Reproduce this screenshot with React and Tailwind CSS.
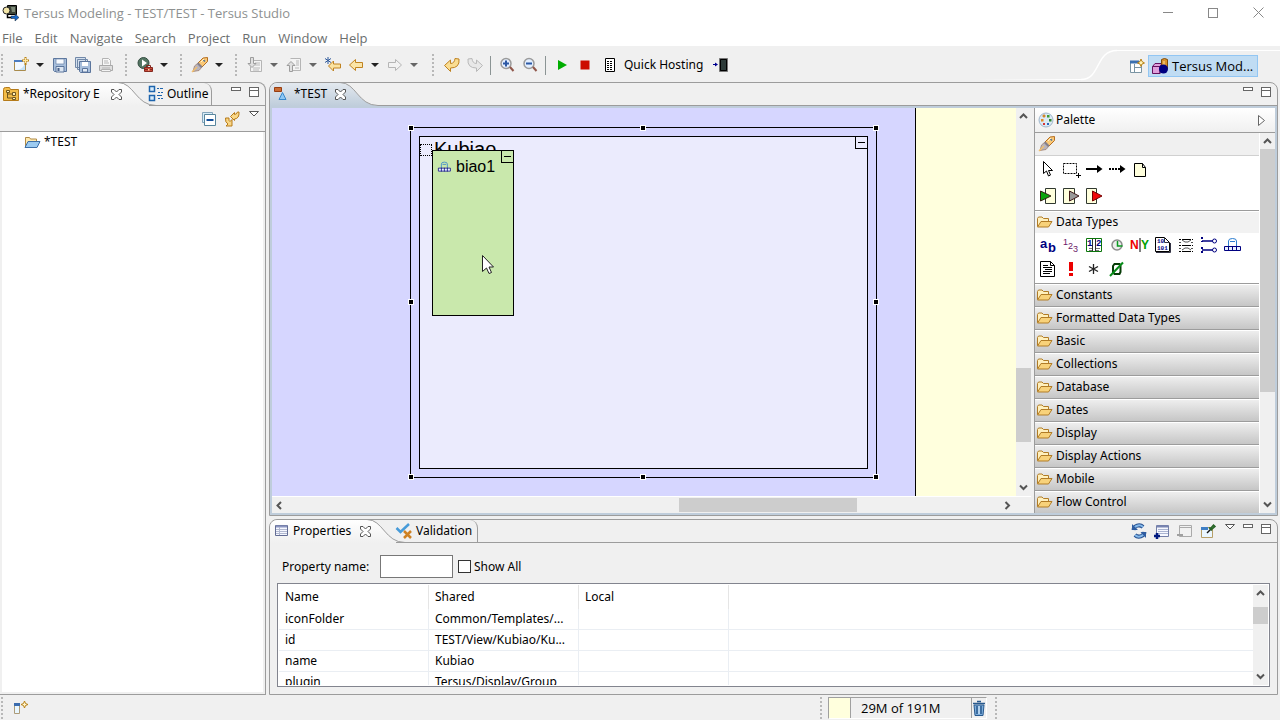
import { useState } from 'react'

const menus = ['File', 'Edit', 'Navigate', 'Search', 'Project', 'Run', 'Window', 'Help']

const drawers = [
  'Constants', 'Formatted Data Types', 'Basic', 'Collections', 'Database',
  'Dates', 'Display', 'Display Actions', 'Mobile', 'Flow Control',
]

const properties = [
  { name: 'iconFolder', shared: 'Common/Templates/...' },
  { name: 'id', shared: 'TEST/View/Kubiao/Ku...' },
  { name: 'name', shared: 'Kubiao' },
  { name: 'plugin', shared: 'Tersus/Display/Group' },
]

/* 16x16 icon drawings, keyed by command */
const art = {
  app: <>
    <path d="M4.500.500h9v9h-9z" fill="#3c4438" stroke="#000" />
    <path d="M8 2h4v5H9z" fill="#7d8a78" />
    <circle cx="3.500" cy="5.500" r="3.500" fill="#f3e6a8" stroke="#222" />
    <path d="M4.500 9.500v3h5" fill="none" stroke="#000" strokeWidth="1.500" />
    <path d="M8 11h4V9l4 3.500-4 3.500v-2.500H8z" fill="#1466c8" stroke="#123" strokeWidth=".5" />
  </>,
  newFile: <>
    <path d="M1.500 3.500h11v10h-11z" fill="#f2f8ff" stroke="#a98b4c" />
    <path d="M1 3h9v2H1z" fill="#4c7cc0" />
    <path d="M3 13q7 0 9-7v7z" fill="#c4e2f7" />
    <path d="M12.500 0v8M9 3.500h7" stroke="#b98216" strokeWidth="2" />
    <path d="M12.500 1v5M10 3.500h5" stroke="#ffe9a0" />
  </>,
  save: <>
    <path d="M1.500 1.500h13v13h-12l-1-1z" fill="#a8bfdc" stroke="#5b759c" />
    <path d="M4 2h8v5H4z" fill="#f8fbff" stroke="#6b84aa" strokeWidth=".7" />
    <path d="M4 9.500h8V15H4z" fill="#dce6f2" stroke="#5b759c" />
    <path d="M5.500 11h2v3h-2z" fill="#48618a" />
  </>,
  saveAll: <>
    <path d="M.5.500h10v10H.500zM2.500 2.500h10v10h-10z" fill="#d3dfed" stroke="#7188a8" />
    <path d="M4.500 4.500h11v11h-10l-1-1z" fill="#a8bfdc" stroke="#5b759c" />
    <path d="M7 5h6v4H7z" fill="#fff" />
    <path d="M7.500 11.500h5V15h-5z" fill="#e4ecf5" stroke="#5b759c" />
  </>,
  print: <>
    <path d="M4.500 1.500h6l2 2v5h-8z" fill="#f8f8f8" stroke="#b3b3b3" />
    <path d="M1.500 8.500h13v5h-13z" fill="#dedede" stroke="#a9a9a9" />
    <path d="M6 4h4M6 6h5M4 11h8" stroke="#b5b5b5" />
    <path d="M3.500 12.500h9v2h-9z" fill="#f4f4f4" stroke="#b3b3b3" />
  </>,
  run: <>
    <circle cx="6.500" cy="6" r="5.500" fill="#537562" stroke="#354e42" />
    <path d="M5 2.500 10 6l-5 3.500z" fill="#fff" />
    <path d="M7.500 10.500h8v4h-8z" fill="#c94a3b" stroke="#84281e" />
    <path d="M9.500 10V8.500h4V10M8 12.500h7" fill="none" stroke="#84281e" />
    <path d="M11 12h1.500v1.500H11z" fill="#ffd1a8" />
  </>,
  rocket: <>
    <path d="M1 14.500 2.500 9 6 6l4 4-3 3.500z" fill="#b9b4bc" stroke="#a08070" strokeWidth=".8" />
    <path d="M6 6 11 1l4.500-.5V4.500L10 10z" fill="#fbc977" stroke="#b56f22" />
    <path d="m5 7 4 4 1.500-1.500-4-4z" fill="#85808c" />
    <path d="m0 15 5-5" stroke="#f3bf6d" strokeWidth="1.500" />
    <path d="m11.500 3 1.500 1.500" stroke="#4b7299" strokeWidth="1.500" />
    <path d="m9 5 3-3" stroke="#fff3cf" />
  </>,
  nextNote: <>
    <path d="M6.500 3.500h8v11h-11v-5" fill="#f4f4f4" stroke="#b5b5b5" />
    <path d="M8 6h5M8 8h5M6 11h7M6 13h6" stroke="#b8b8b8" />
    <path d="M3.500.500h3v6H9L5 10.500 1 6.500h2.500z" fill="#e0e0e0" stroke="#9d9d9d" />
  </>,
  prevNote: <>
    <path d="M4.500 1.500h10v12h-8" fill="#f4f4f4" stroke="#b5b5b5" />
    <path d="M10 4h3M10 6h3M10 8h3M9 11h4" stroke="#b8b8b8" />
    <path d="M3.500 14.500v-6H1L5 4.500l4 4H6.500v6z" fill="#e0e0e0" stroke="#9d9d9d" />
  </>,
  lastEdit: <>
    <path d="M3.500 9 8.500 4v3h7v4h-7v3z" fill="#fbe3a1" stroke="#c08321" />
    <path d="M3 0v7M0 1.500l6 4M6 1.500l-6 4" stroke="#2f5a9c" />
  </>,
  back: <path d="M1.500 8 7.500 2.500v3h7v5h-7v3z" fill="#fbe5a8" stroke="#c08321" />,
  forward: <path d="M14.500 8 8.500 2.500v3h-7v5h7v3z" fill="#f2f2f2" stroke="#b5b5b5" />,
  undo: <path d="M.5 8.500 6.500 3V6.500q4 0 4.500-5l4 .5q1 9-8.500 9v3.500z" fill="#fadd92" stroke="#bf8220" />,
  redo: <path d="M15.500 8.500 9.500 3V6.500q-4 0-4.500-5L1 2q-1 9 8.500 9v3.500z" fill="#e8e8e8" stroke="#b9b9b9" />,
  zoomIn: <>
    <circle cx="7" cy="6.500" r="5" fill="#e4efff" stroke="#9b9b9b" strokeWidth="1.500" />
    <path d="M4 6.500h6M7 3.500v6" stroke="#2b58a5" strokeWidth="2" />
    <path d="m11 10 3.500 4" stroke="#90574b" strokeWidth="2" />
  </>,
  zoomOut: <>
    <circle cx="7" cy="6.500" r="5" fill="#e4efff" stroke="#9b9b9b" strokeWidth="1.500" />
    <path d="M4 6.500h6" stroke="#2b58a5" strokeWidth="2" />
    <path d="m11 10 3.500 4" stroke="#90574b" strokeWidth="2" />
  </>,
  play: <path d="M4 3 13 8 4 13z" fill="#00ad00" />,
  stop: <path d="M3.500 3.500h9v9h-9z" fill="#cc0c00" />,
  log: <>
    <path d="M3.500 1.500h9v13h-9z" fill="#fff" stroke="#000" />
    <path d="M5 4.500h6M5 6.500h6M5 8.500h6M5 10.500h6M5 12.500h5" stroke="#000" strokeDasharray="2 1" />
  </>,
  phone: <>
    <path d="M6.500 1.500h8v13h-8z" fill="#2d3b39" stroke="#777" />
    <path d="M7.500 2.500h6v11h-6z" fill="none" stroke="#000" />
    <path d="M0 7.500h4" stroke="#000090" />
    <path d="M2 5.500 5 7.500 2 9.500z" fill="#000090" />
  </>,
  openView: <>
    <path d="M1.500 3.500h11v11h-11z" fill="#fff" stroke="#7a94a3" />
    <path d="M1 2.500h9v3H1z" fill="#3c70b0" />
    <path d="M5.500 6v8M6 9.500h6.500" stroke="#7a94a3" />
    <path d="m12 1 1 2.500L15.500 5 13 6l-1 2.500L11 6 8.500 5l2.500-1.500z" fill="#fff3b5" stroke="#b98216" />
  </>,
  shapes: <>
    <path d="M.5 8.500 3 5.500h7l-2 3v7H.500z" fill="#df9fdb" stroke="#65105d" />
    <path d="M.5 8.500h7.500v7" fill="none" stroke="#65105d" />
    <path d="M9.500 1.500q3-2 6 0V11h-6z" fill="#d9932c" stroke="#804c0c" />
    <path d="M12 3v6" stroke="#ffe0a0" />
    <circle cx="11.500" cy="11" r="4.500" fill="#000080" />
  </>,
  repo: <>
    <path d="M.5 3.500q0-2 2-2h4l1 2h8v11H.500z" fill="#f2bc49" stroke="#b57b1a" />
    <path d="M4.500 5v7h5M4.500 8h5" fill="none" stroke="#6f551f" />
    <path d="M3.500 4.500h3v2h-3zM9.500 6.500h3v3h-3zM9.500 11.500h3v2h-3z" fill="#fff0b8" stroke="#6f551f" />
  </>,
  outline: <>
    <path d="M.5.500h5v5h-5zM.5 9.500h5v5h-5z" fill="#d8ecfb" stroke="#1d64ad" strokeWidth="1.500" />
    <path d="M8 2.500h2M11 2.500h3M9 6.500h2M12 6.500h2M8 9.500h5M9 12.500h2M12 12.500h2" stroke="#1d64ad" />
  </>,
  diagram: <>
    <path d="M.5 1.500h7v4h-7z" fill="#c96b32" stroke="#973d10" />
    <path d="M8.500 6.500 12 13.500H5z" fill="#8dc8f5" stroke="#3888cc" />
  </>,
  collapse: <>
    <path d="M1.500 1.500h10v10h-10z" fill="#d8ecf8" stroke="#84a5bb" />
    <path d="M3.500 3.500h11v11h-11z" fill="#fff" stroke="#58869d" />
    <path d="M5.500 9h7" stroke="#124f9a" strokeWidth="2" />
  </>,
  sync: <>
    <path d="M6.500 5.500 10.500 1.500v2q2 0 3-2.500h1.500q.5 6.500-4.500 7v1.500z" fill="#f9d787" stroke="#b77a18" />
    <path d="M1.500 7h3.500q-.5 3 1 3.500l2-2V15H2l2-2q-3-1.500-2.500-6z" fill="#f9d787" stroke="#b77a18" />
  </>,
  project: <>
    <path d="M1.500 12V3.500h4l1 1.500h6v3" fill="#ffeab0" stroke="#b08a46" />
    <path d="M4 7.500h12l-3 6H1z" fill="#9ccbf1" stroke="#3d6fa7" />
  </>,
  folder: <>
    <path d="M.5 12.500V4.500l1-1.500h3.500l1.500 1.500h5v3" fill="#fff0bd" stroke="#b17c26" />
    <path d="M4 7.500H15l-3.500 5.500H.500z" fill="#f8d27a" stroke="#b17c26" />
  </>,
  table: <>
    <path d="M.5 2.500h12v10H.500z" fill="#f5f7ff" stroke="#626c94" />
    <path d="M1 3.500h11" stroke="#8a94c0" strokeWidth="2" />
    <path d="M1 6.500h11M1 8.500h11M1 10.500h11M4.500 4v8" stroke="#b1b8d0" />
  </>,
  validation: <>
    <path d="m.500 5 4 4L13 1" fill="none" stroke="#479bd9" strokeWidth="2.500" />
    <path d="m8 8 7 7M15 8l-7 7" stroke="#ce8123" strokeWidth="2.500" />
  </>,
  palette: <>
    <circle cx="7" cy="8" r="7" fill="#dce9f5" stroke="#a0b6cb" />
    <path d="M4 3h2v2H4z" fill="#f3a742" stroke="#bf7418" strokeWidth=".7" />
    <path d="M8 3h2.500v2.500H8z" fill="#3e9b33" /><path d="M10 7h2.500v2.500H10z" fill="#2c862a" />
    <path d="M2 7h2.500v2.500H2z" fill="#e18b24" /><path d="M4 11h2v2H4z" fill="#d83434" />
    <path d="M8 11h2v2H8z" fill="#2868bb" />
  </>,
  pointer: <path d="M3.500.500v12l3-2.500 2 5 2-1-2-4.500h4z" fill="#fff" stroke="#000" />,
  marquee: <>
    <path d="M.5 2.500h13v10H.500z" fill="none" stroke="#000" strokeDasharray="2 1" />
    <path d="M15.500 12v5M13 14.500h5" stroke="#000" />
  </>,
  flow: <><path d="M0 8h12" stroke="#000" strokeWidth="2" /><path d="M11 4 16.500 8 11 12z" /></>,
  dashFlow: <><path d="M0 8h12" stroke="#000" strokeWidth="2" strokeDasharray="2 1" /><path d="M11 4 16.500 8 11 12z" /></>,
  note: <path d="M2.500 2.500h8l3 4v9h-11zM10.500 2.500v4h3" fill="#ffffdd" stroke="#000" />,
  entry: <><path d="M5.500.500h10v15h-10z" fill="#ffffdd" stroke="#303830" /><path d="M.5 3 11 8 .500 13z" fill="#0aa40a" stroke="#321" /></>,
  slot: <><path d="M.5.500h11v15H.500z" fill="#ffffdd" stroke="#303830" /><path d="M6.500 3 16 8l-9.500 5z" fill="#999" stroke="#411a1a" /></>,
  exit: <><path d="M.5.500h10v15H.500z" fill="#ffffdd" stroke="#303830" /><path d="M6.500 3 16 8l-9.500 5z" fill="#f00808" stroke="#700" /></>,
  text: <g fill="#000080" fontFamily="Liberation Sans" fontWeight="700">
    <text x="0" y="11" fontSize="13">a</text><text x="8" y="15" fontSize="13">b</text>
  </g>,
  number: <g fill="#6b1768" fontFamily="Liberation Sans" fontSize="9">
    <text x="0" y="8">1</text><text x="5" y="12">2</text><text x="10" y="15">3</text>
  </g>,
  book: <>
    <path d="M.5 1.500h15v13H.500z" fill="#fff" stroke="#0b760b" />
    <path d="M6.500 2v12M9.500 2v12" stroke="#303030" />
    <g fill="#000080" fontFamily="Liberation Mono" fontSize="9" fontWeight="700"><text x="1" y="9">1</text><text x="10" y="9">2</text></g>
    <path d="M3 11.500h3M10 11.500h4M3 13.500h3M10 13.500h3" stroke="#777" />
  </>,
  clock: <>
    <circle cx="8" cy="8" r="5" fill="#eee" stroke="#8c8c8c" strokeWidth="1.500" />
    <path d="M8.500 4v5h5" fill="none" stroke="#0a9a20" strokeWidth="1.500" />
  </>,
  yesNo: <g fontFamily="Liberation Sans" fontSize="12" fontWeight="700">
    <text x="-2" y="12" fill="#e00">N</text><path d="M8 1v14" stroke="#000" /><text x="9" y="12" fill="#00a000">Y</text>
  </g>,
  binary: <>
    <path d="M.5.500h9l5 5v9H.500z" fill="#fff" stroke="#000" />
    <path d="M9.500.500v5h5M15.500 6v9.500H1" fill="none" stroke="#334" />
    <g fill="#000080" fontFamily="Liberation Mono" fontSize="6" fontWeight="700"><text x="2" y="6">10</text><text x="2" y="13">101</text></g>
  </>,
  list: <>
    <path d="M1 2.500h14M1 8.500h14M1 14.500h14" stroke="#000" strokeDasharray="2 1 9 1" />
    <path d="M1 5.500h2M13 5.500h2M1 11.500h2M13 11.500h2M4 3l3 2h3l3-2M4 13l3-2h3l3 2" fill="none" stroke="#555" />
  </>,
  record: <>
    <path d="M1 0v5M1 10v6" stroke="#000080" strokeWidth="2" strokeDasharray="2 2" />
    <path d="M1 4h11M1 13h11" stroke="#000080" strokeWidth="1.500" />
    <circle cx="13.500" cy="4" r="2" fill="#fff" stroke="#000080" /><circle cx="13.500" cy="13" r="2" fill="#fff" stroke="#000080" />
  </>,
  display: <>
    <path d="M4.500 9V4q0-2.500 4-2.500t4 2.500v5" fill="none" stroke="#2b7dd0" />
    <path d="M6 4.500h5" stroke="#2b7dd0" />
    <path d="M.5 9.500h16v4H.500zM4.500 9v5M8.500 9v5M12.500 9v5" fill="#eaf2ff" stroke="#000080" />
  </>,
  document: <>
    <path d="M.5.500h10l4 4v11H.500z" fill="#fff" stroke="#000" />
    <path d="M10.500.500v4h4M3 4.500h5M3 6.500h9M5 8.500h7M3 10.500h9M3 12.500h7" fill="none" stroke="#000" />
  </>,
  error: <path d="M6 1h4v9H6zM6 12h4v3H6z" fill="#ec0000" />,
  anything: <path d="M7.500 3v10M3 5.500l9 5M12 5.500l-9 5" stroke="#222" strokeWidth="1.300" />,
  nothing: <>
    <path d="M5.500 3h5l1 2v6l-1 2h-5l-1.500-2V5z" fill="none" stroke="#063b06" strokeWidth="2" />
    <path d="M1 15 14 1.500" stroke="#078c18" strokeWidth="2" />
  </>,
  refresh: <>
    <path d="M2.500 7A5.500 5 0 0 1 12 4M13.500 9A5.500 5 0 0 1 4 12" fill="none" stroke="#264f8f" strokeWidth="4" />
    <path d="M2.500 7A5.500 5 0 0 1 12 4M13.500 9A5.500 5 0 0 1 4 12" fill="none" stroke="#85b9ea" strokeWidth="2" />
    <path d="M15 9v6L9.500 9zM1 1v6h6z" fill="#2e5ca0" />
  </>,
  addRow: <>
    <path d="M2.500 2.500h12v11h-12z" fill="#f6f8ff" stroke="#737fa8" />
    <path d="M3 3.500h11" stroke="#7884b1" strokeWidth="2" /><path d="M4 6.500h10M4 8.500h10M4 10.500h10" stroke="#aab4d1" />
    <path d="M0 13h6M3 10v6" stroke="#001a80" strokeWidth="2.500" />
  </>,
  removeRow: <>
    <path d="M2.500 2.500h12v11h-12z" fill="#f1f1f1" stroke="#aaa" />
    <path d="M3 4.500h11" stroke="#aaa" /><path d="M0 12h6" stroke="#a0a0a0" strokeWidth="2" />
  </>,
  pin: <>
    <path d="M1.500 4.500h11v10h-11z" fill="#eaf6ff" stroke="#b69f68" />
    <path d="M1 4h7v3H1z" fill="#3f7fc5" />
    <path d="m7 10 4-4" stroke="#111" strokeWidth="1.500" />
    <path d="m9 4.500 3 3M10.500 5.500l3-3.500 1.500 1.500-3.500 3z" stroke="#286428" fill="#57984c" strokeWidth="1.500" />
  </>,
  fastView: <>
    <path d="M1.500 3.500h5v10h-5z" fill="#e9f7ff" stroke="#ad9b78" />
    <path d="M1 3h6v3H1z" fill="#3b6cae" />
    <path d="m11.500 1 1 2.500 2.500 1-2.500 1-1 2.500-1-2.500-2.500-1 2.500-1z" fill="#fff6d0" stroke="#b98216" />
  </>,
  trash: <>
    <path d="M3 5h10l-1 10.500H4z" fill="#7daedc" stroke="#28598d" />
    <path d="M2 3.500h12M6 1.500h4M6 6v8M10 6v8" stroke="#28598d" strokeWidth="1.500" />
    <path d="M8 6v8" stroke="#e6f3ff" />
  </>,
}

function Icon({ name, className = 'size-4' }) {
  return <svg viewBox="0 0 16 16" className={`${className} shrink-0 overflow-visible`} aria-hidden="true">{art[name]}</svg>
}

function Tool({ name, label }) {
  return (
    <button aria-label={label || name} className="flex w-[23px] h-6 shrink-0 items-center justify-center">
      <Icon name={name} />
    </button>
  )
}

function Caret({ disabled }) {
  return (
    <button aria-label="More" disabled={disabled} className="flex w-4 h-6 shrink-0 items-center justify-center">
      <svg width="8" height="4" viewBox="0 0 8 4"><path d="M0 0h8L4 4z" fill={disabled ? '#666' : '#222'} /></svg>
    </button>
  )
}

function Grip() {
  return <div className="h-[22px] mr-1 w-1 shrink-0 border-l-2 border-dotted border-[#b8b8b8]" />
}

function Divider() {
  return <div className="mx-1 h-[19px] w-px shrink-0 bg-[#8b9494]" />
}

function MinMax({ menu }) {
  return (
    <div className="flex items-start gap-2">
      {menu && <ViewMenu />}
      <button aria-label="Minimize" className="h-1 w-2.5 border border-[#666] bg-white" />
      <button aria-label="Maximize" className="h-2.5 w-2.5 border border-[#666] bg-white">
        <span className="mb-1 block h-px bg-[#666]" />
      </button>
    </div>
  )
}

function ViewMenu() {
  return (
    <button aria-label="View menu">
      <svg width="10" height="6" viewBox="0 0 10 6"><path d="M.5.500h9L5 5z" fill="#fff" stroke="#555" /></svg>
    </button>
  )
}

function Close() {
  return (
    <button aria-label="Close" className="relative z-10 ml-2">
      <svg width="11" height="11" viewBox="0 0 11 11">
        <path d="M.5.500h2.500l2.500 2.500L8 .500h2.500V3L8 5.500 10.500 8v2.500H8L5.500 8 3 10.500H.500V8L3 5.500.500 3z" fill="#fff" stroke="#555" />
      </svg>
    </button>
  )
}

/* the sloping right edge of a selected tab */
function Slope({ fill }) {
  return (
    <svg width="40" height="23" viewBox="0 0 40 23" className="-ml-1 shrink-0">
      <defs>
        <linearGradient id={`slope-${fill.slice(1)}`} gradientUnits="userSpaceOnUse" x1="0" x2="0" y1="0" y2="23">
          <stop offset="0" stopColor={fill === '#bfcddb' ? '#e3e9ef' : '#fff'} />
          <stop offset="1" stopColor={fill} />
        </linearGradient>
      </defs>
      <path d="M0 0C16 0 18 22.500 38 22.500h2V23H0z" fill={`url(#slope-${fill.slice(1)})`} />
      <path d="M0-.5C16-.5 18 22.500 38 22.500h2" fill="none" stroke="#9c9c9c" />
    </svg>
  )
}

function Arrow({ dir }) {
  const d = {
    up: 'M1 6 4.500 2.500 8 6', down: 'M1 2.500 4.500 6 8 2.500',
    left: 'M6 1 2.500 4.500 6 8', right: 'M2.500 1 6 4.500 2.500 8',
  }
  return (
    <button aria-label={`Scroll ${dir}`} className="flex size-[15px] shrink-0 items-center justify-center">
      <svg width="9" height="9" viewBox="0 0 9 9"><path d={d[dir]} fill="none" stroke="#555" strokeWidth="2" /></svg>
    </button>
  )
}

function ScrollBar({ horizontal, before, thumb, after }) {
  return (
    <div className={`flex shrink-0 bg-[#f0f0f0] ${horizontal ? 'h-4 py-px' : 'w-[15px] flex-col py-px'}`}>
      <Arrow dir={horizontal ? 'left' : 'up'} />
      <div className={before} />
      <div className={`shrink-0 bg-[#cdcdcd] ${thumb}`} />
      <div className={after} />
      <Arrow dir={horizontal ? 'right' : 'down'} />
    </div>
  )
}

function TitleBar() {
  return (
    <header className="bg-white font-['Open_Sans','Noto_Sans',sans-serif] text-[13px] text-[#8e9191]">
      <div className="flex h-[25px] items-center pl-[3px]">
        <Icon name="app" />
        <h1 className="ml-[5px] flex-1">Tersus Modeling - TEST/TEST - Tersus Studio</h1>
        <div className="flex items-center gap-[35px] pr-4">
          <button aria-label="Minimize window" className="h-px w-2.5 bg-[#888]" />
          <button aria-label="Maximize window" className="size-2.5 border border-[#888]" />
          <button aria-label="Close window"><svg width="11" height="11" viewBox="0 0 11 11"><path d="m.500.500 10 10M10.500.500l-10 10" stroke="#888" /></svg></button>
        </div>
      </div>
      <nav className="flex h-[21px] items-center gap-3 pl-0.5 pt-1 text-[#6b6e6e]">
        {menus.map(m => <button key={m}>{m}</button>)}
      </nav>
    </header>
  )
}

function ToolBar() {
  return (
    <div className="flex h-9 items-center">
      <div className="flex flex-none items-center pt-0.5">
        <div className="flex items-center pl-px">
          <Grip />
          <Tool name="newFile" label="New" /><Caret />
          <Tool name="save" label="Save" /><Tool name="saveAll" label="Save all" /><Tool name="print" label="Print" />
        </div>
        <div className="ml-2 flex items-center"><Grip /><Tool name="run" label="Run" /><Caret /></div>
        <div className="ml-2 flex items-center"><Grip /><Tool name="rocket" label="Launch" /><Caret /></div>
        <div className="ml-2 flex items-center">
          <Grip />
          <Tool name="nextNote" label="Next annotation" /><Caret disabled />
          <Tool name="prevNote" label="Previous annotation" /><Caret disabled />
          <Tool name="lastEdit" label="Last edit location" />
          <Tool name="back" label="Back" /><Caret />
          <Tool name="forward" label="Forward" /><Caret disabled />
        </div>
        <div className="ml-2.5 flex items-center">
          <Grip />
          <Tool name="undo" label="Undo" /><Tool name="redo" label="Redo" />
          <Divider />
          <Tool name="zoomIn" label="Zoom in" /><Tool name="zoomOut" label="Zoom out" />
          <Divider />
          <Tool name="play" label="Start" /><Tool name="stop" label="Stop" />
          <button className="mx-1.5 flex items-center gap-1.5"><Icon name="log" />Quick Hosting</button>
          <Tool name="phone" label="Mobile preview" />
        </div>
      </div>
      <div className="flex h-full flex-1 items-end pb-0.5"><div className="h-px flex-1 bg-linear-to-r from-[#f0f0f0] from-70% to-white" /></div>
      <svg width="36" height="36" viewBox="0 0 36 36" className="shrink-0"><path d="M0 33.500C20 33.500 14 4.500 36 4.500" fill="none" stroke="#fff" strokeWidth="1.500" /></svg>
      <div className="mt-1 flex h-8 items-center border-t border-white pb-0.5 pl-2 pr-[22px]">
        <Tool name="openView" label="Open perspective" />
        <button className="flex h-[22px] w-[110px] items-center gap-1 border border-[#92c6f3] bg-[#c0dcf3] px-[3px] font-['Open_Sans',sans-serif] text-[13px]">
          <Icon name="shapes" />Tersus Mod...
        </button>
      </div>
    </div>
  )
}

function Repository() {
  return (
    <aside className="flex w-[266px] shrink-0 flex-col rounded-tr-lg border border-l-0 border-[#9c9c9c]">
      <div className="flex h-[23px] shrink-0" role="tablist">
        <div role="tab" aria-selected="true" className="flex w-[122px] items-center bg-linear-to-b from-white to-[#f0f0f0] pb-px pl-[3px]">
          <Icon name="repo" /><span className="ml-1 flex-1">*Repository E</span><Close />
        </div>
        <Slope fill="#f0f0f0" />
        <div role="tab" aria-selected="false" className="-ml-[9px] flex w-[63px] items-center gap-0.5 rounded-tr-lg border-r border-[#9c9c9c] pb-px shadow-[inset_0_-1px_#9c9c9c]">
          <Icon name="outline" />Outline
        </div>
        <div className="flex flex-1 justify-end border-b border-[#9c9c9c] pt-1 pr-1.5"><MinMax /></div>
      </div>
      <div className="flex h-[26px] shrink-0 items-center justify-end border-b border-[#9c9c9c] pr-1.5">
        <Tool name="collapse" label="Collapse all" /><Tool name="sync" label="Link with editor" />
        <div className="mb-2.5 ml-1.5 flex"><ViewMenu /></div>
      </div>
      <ul className="mx-0.5 mb-0.5 flex-1 bg-white">
        <li className="flex h-5 items-center gap-1 pl-[22px]"><Icon name="project" />*TEST</li>
      </ul>
    </aside>
  )
}

const handles = [
  '-left-[3px] -top-[3px]', 'left-1/2 -ml-1 -top-[3px]', '-right-[3px] -top-[3px]',
  '-left-[3px] top-1/2 -mt-1', '-right-[3px] top-1/2 -mt-1',
  '-left-[3px] -bottom-[3px]', 'left-1/2 -ml-1 -bottom-[3px]', '-right-[3px] -bottom-[3px]',
]

function Toggle() {
  return (
    <button aria-label="Collapse" className="absolute -right-px -top-px flex size-[13px] items-center justify-center border border-black">
      <span className="h-px w-[7px] bg-black" />
    </button>
  )
}

function Canvas() {
  return (
    <div className="relative flex min-h-0 flex-1 overflow-hidden bg-[#ffffdd]">
      <div className="w-[644px] border-r border-black bg-[#d6d6ff]" />
      <div className="absolute left-[138px] top-[19px] h-[351px] w-[467px] border border-black">
        {handles.map(h => <span key={h} className={`absolute z-10 size-1.5 border border-white bg-black ${h}`} />)}
        <div className="absolute left-2 top-2 h-[333px] w-[449px] border border-black bg-[#ebebfd] font-['Liberation_Sans',sans-serif] text-black">
          <span className="absolute left-0 top-[7px] size-3 border border-dotted border-black" />
          <span className="absolute left-3.5 top-0 text-[20px] leading-6">Kubiao</span>
          <Toggle />
          <div className="absolute left-3 top-[13px] h-[166px] w-[82px] border border-black bg-[#c9e8ac]">
            <div className="flex items-center gap-1.5 pl-[5px] pt-1.5 text-[16px] leading-5">
              <Icon name="display" className="size-3" />biao1
            </div>
            <Toggle />
            <svg width="12" height="19" viewBox="0 0 12 19" className="absolute left-[49px] top-[104px]">
              <path d="M.5.500v16l4-3.500 2.500 5.500 2.500-1L7 12h4.500z" fill="#fff" stroke="#222" />
            </svg>
          </div>
        </div>
      </div>
    </div>
  )
}

function Drawer({ name, open, onClick }) {
  return (
    <button
      onClick={onClick}
      className={`flex h-[23px] w-full shrink-0 items-center gap-[3px] border-t border-[#9c9c9c] pl-0.5 shadow-[inset_0_1px_#fff] ${open ? 'bg-[#f2f2f2]' : 'bg-linear-to-b from-[#f0f0f0] to-[#c6c6c6]'}`}
    >
      <Icon name="folder" />{name}
    </button>
  )
}

function PaletteRow({ items }) {
  return <div className="flex">{items.map(i => <Tool key={i} name={i} />)}</div>
}

function Palette() {
  const [open, setOpen] = useState(true)
  return (
    <section className="flex w-[241px] shrink-0 flex-col border-l border-[#9c9c9c] bg-white">
      <div className="flex h-[25px] shrink-0 items-center gap-px border-b border-[#9c9c9c] bg-linear-to-b from-white to-[#f0f0f0] pl-1 pr-2.5">
        <Icon name="palette" /><h2 className="flex-1">Palette</h2>
        <button aria-label="Hide palette"><svg width="7" height="11" viewBox="0 0 7 11"><path d="M.5.500v10l6-5z" fill="#fff" stroke="#666" /></svg></button>
      </div>
      <div className="flex min-h-0 flex-1 gap-px">
        <div className="flex min-w-0 flex-1 flex-col overflow-hidden">
          <div className="flex h-[23px] shrink-0 items-center border-b border-[#d0d0d0] bg-[#f0f0f0]"><Tool name="rocket" label="Recent" /></div>
          <div className="flex h-[54px] shrink-0 flex-col gap-[3px] pl-px pt-px">
            <PaletteRow items={['pointer', 'marquee', 'flow', 'dashFlow', 'note']} />
            <PaletteRow items={['entry', 'slot', 'exit']} />
          </div>
          <Drawer name="Data Types" open={open} onClick={() => setOpen(!open)} />
          {open && (
            <div className="h-[50px] shrink-0 pl-px">
              <PaletteRow items={['text', 'number', 'book', 'clock', 'yesNo', 'binary', 'list', 'record', 'display']} />
              <PaletteRow items={['document', 'error', 'anything', 'nothing']} />
            </div>
          )}
          {drawers.map(d => <Drawer key={d} name={d} />)}
        </div>
        <ScrollBar thumb="h-[243px]" after="flex-1" />
      </div>
    </section>
  )
}

function Editor() {
  return (
    <section className="flex min-h-0 flex-1 flex-col rounded-t-lg border border-[#9c9c9c]">
      <div className="flex h-[23px] shrink-0" role="tablist">
        <div role="tab" aria-selected="true" className="flex w-[74px] items-center rounded-tl-lg bg-linear-to-b from-[#e3e9ef] to-[#bfcddb] pb-px pl-1">
          <Icon name="diagram" /><span className="ml-1 flex-1">*TEST</span><Close />
        </div>
        <Slope fill="#bfcddb" />
        <div className="flex flex-1 justify-end border-b border-[#9c9c9c] pt-1 pr-1.5"><MinMax /></div>
      </div>
      <div className="flex min-h-0 flex-1 border-2 border-[#bfcddb] bg-[#f0f0f0]">
        <div className="flex min-w-0 flex-1 flex-col">
          <div className="flex min-h-0 flex-1 border-b border-white">
            <Canvas />
            <ScrollBar before="grow-[242]" thumb="h-[74px]" after="grow-[38]" />
          </div>
          <div className="mr-4 flex flex-col"><ScrollBar horizontal before="grow-[390]" thumb="w-[178px]" after="grow-[142]" /></div>
        </div>
        <div className="w-[3px]" />
        <Palette />
      </div>
    </section>
  )
}

function Properties() {
  const [filter, setFilter] = useState('')
  return (
    <section className="flex h-[176px] shrink-0 flex-col rounded-t-lg border border-[#9c9c9c]">
      <div className="flex h-[23px] shrink-0" role="tablist">
        <div role="tab" aria-selected="true" className="flex w-[101px] items-center rounded-tl-lg bg-linear-to-b from-white to-[#f0f0f0] pb-px pl-[5px]">
          <Icon name="table" /><span className="ml-0.5 flex-1">Properties</span><Close />
        </div>
        <Slope fill="#f0f0f0" />
        <div role="tab" aria-selected="false" className="-ml-[11px] flex w-[82px] items-center gap-1 rounded-tr-lg border-r border-[#9c9c9c] pb-px shadow-[inset_0_-1px_#9c9c9c]">
          <Icon name="validation" />Validation
        </div>
        <div className="flex flex-1 items-center justify-end border-b border-[#9c9c9c] pr-1.5">
          <Tool name="refresh" /><Tool name="addRow" label="Add property" />
          <Tool name="removeRow" label="Remove property" /><Tool name="pin" label="Pin" />
          <div className="mb-1 ml-1.5"><MinMax menu /></div>
        </div>
      </div>
      <div className="flex h-10 shrink-0 items-center pl-3 pt-[7px]">
        <label htmlFor="prop" className="w-[98px]">Property name:</label>
        <input id="prop" value={filter} onChange={e => setFilter(e.target.value)} className="h-[23px] w-[73px] border border-[#777] bg-white px-1" />
        <label className="ml-[5px] flex items-center gap-[3px]">
          <input type="checkbox" className="size-[13px] appearance-none border border-[#333] bg-white" />Show All
        </label>
      </div>
      <div className="mx-[7px] mb-[7px] flex min-h-0 flex-1 border border-[#82848e] bg-white p-px">
        <div className="min-w-0 flex-1 overflow-hidden">
          <table className="w-full table-fixed border-separate border-spacing-0 text-left">
            <thead>
              <tr className="h-6">
                <th className="w-[150px] border-r border-[#e5e5e5] pl-1.5 font-normal">Name</th>
                <th className="w-[150px] border-r border-[#e5e5e5] pl-1.5 font-normal">Shared</th>
                <th className="w-[150px] border-r border-[#e5e5e5] pl-1.5 font-normal">Local</th>
                <th aria-label="Filler" />
              </tr>
            </thead>
            <tbody>
              {properties.map(p => (
                <tr key={p.name} className="h-[21px]">
                  <td className="border-b border-r border-[#eaeef3] pl-1.5">{p.name}</td>
                  <td className="whitespace-nowrap border-b border-r border-[#eaeef3] pl-1.5">{p.shared}</td>
                  <td className="border-b border-r border-[#eaeef3]" />
                  <td className="border-b border-[#eaeef3]" />
                </tr>
              ))}
            </tbody>
          </table>
        </div>
        <ScrollBar before="h-1.5" thumb="h-[17px]" after="flex-1" />
      </div>
    </section>
  )
}

function StatusBar() {
  return (
    <footer className="flex h-[25px] shrink-0 items-center">
      <div className="flex flex-1 items-center pl-px"><Grip /><Tool name="fastView" label="Show view" /></div>
      <div className="flex items-center pr-[277px]">
        <Grip />
        <div className="flex h-[22px] items-stretch border border-b-white border-r-white border-[#a0a0a0]">
          <div className="w-[22px] border-r border-[#a0a0a0] bg-[#ffffdd]" />
          <div className="flex w-[121px] items-center border-r border-[#a0a0a0] pl-2.5 font-['Open_Sans',sans-serif] text-[13px]">29M of 191M</div>
          <button aria-label="Run garbage collector" className="flex w-3.5 items-center justify-center"><Icon name="trash" /></button>
        </div>
        <div className="ml-2 flex"><Grip /></div>
      </div>
    </footer>
  )
}

export default function App() {
  return (
    <div className="flex h-screen flex-col overflow-hidden bg-[#f0f0f0] font-['Noto_Sans','Open_Sans',sans-serif] text-[12px] leading-4 text-black">
      <TitleBar />
      <ToolBar />
      <main className="flex min-h-0 flex-1 gap-[3px] pr-0.5">
        <Repository />
        <div className="flex min-w-0 flex-1 flex-col gap-[3px]">
          <Editor />
          <Properties />
        </div>
      </main>
      <StatusBar />
    </div>
  )
}
